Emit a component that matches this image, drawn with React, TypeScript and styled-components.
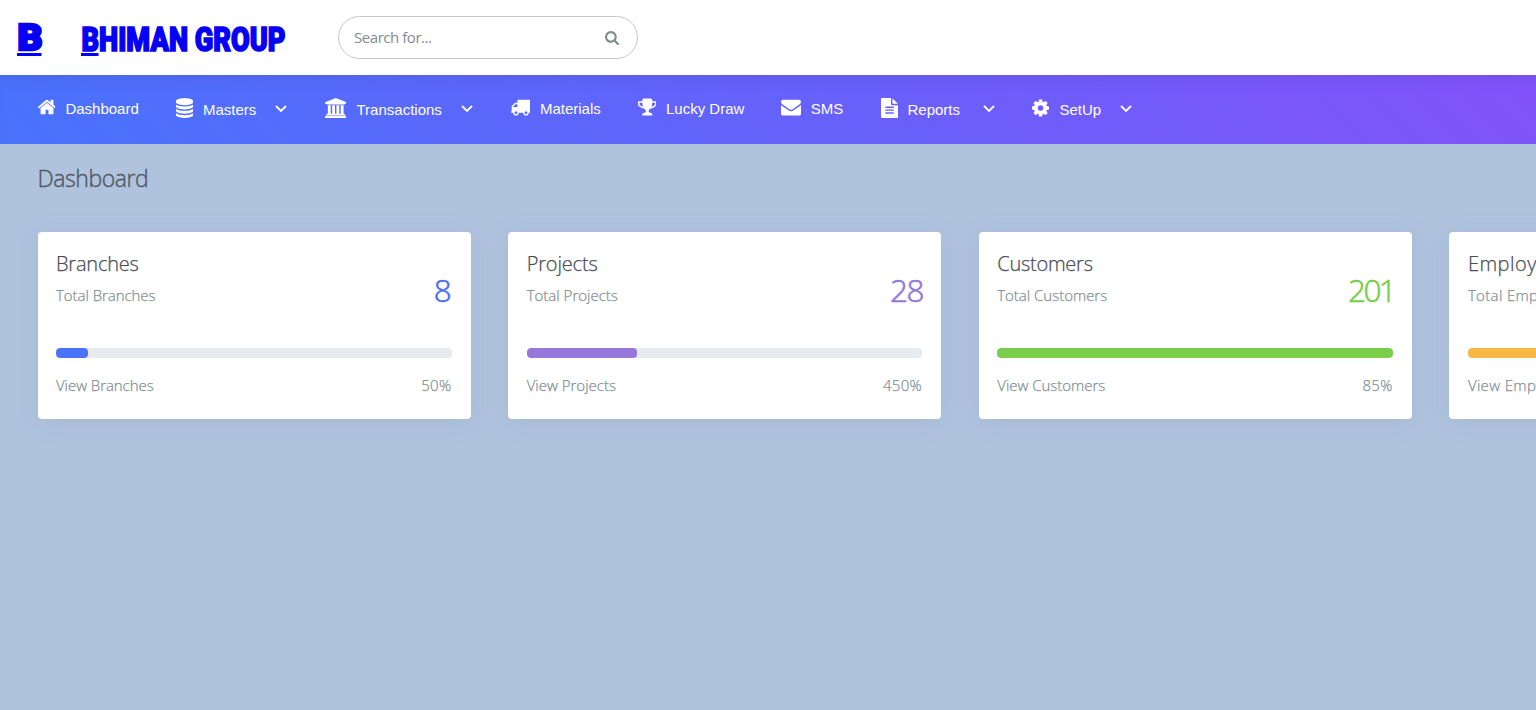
import React from "react";
import styled, { createGlobalStyle } from "styled-components";

const GlobalStyle = createGlobalStyle`
  * { box-sizing: border-box; }
  body {
    margin: 0;
    background: #b0c3dd;
    font-family: "Open Sans", "Noto Sans", sans-serif;
    font-weight: 300;
  }
`;

const Page = styled.div`
  width: 100%;
  min-height: 710px;
  overflow: hidden;
  background: #b0c3dd;
`;

const Header = styled.header`
  height: 75px;
  background: #fff;
  display: flex;
  align-items: flex-start;
`;

const Logo = styled.svg`
  width: 300px;
  height: 75px;
  display: block;
  flex: none;
`;

const SearchBox = styled.label`
  width: 300px;
  height: 43px;
  margin: 16px 0 0 38px;
  padding: 0 18px 2px 15px;
  border: 1px solid #c3c6ca;
  border-radius: 22px;
  display: flex;
  align-items: center;
  justify-content: space-between;
  color: #7f8d91;
  font-size: 15px;
  font-weight: 400;
  letter-spacing: -0.45px;

  svg {
    margin-top: 2px;
  }
`;

const Nav = styled.nav`
  width: 1920px;
  height: 69px;
  padding-left: 37.5px;
  display: flex;
  gap: 37.5px;
  background: linear-gradient(45deg, #4872fd 0%, #904afa 100%);
  box-shadow: inset 0 12px 16px -10px rgba(60, 70, 140, 0.22);
`;

const NavItem = styled.a<{ $width: number; $drop: number }>`
  width: ${(p) => p.$width}px;
  height: 22px;
  margin-top: ${(p) => 22 + p.$drop}px;
  flex: none;
  display: flex;
  align-items: flex-start;
  color: #fff;
  font: 400 15px/24px "Liberation Sans", Arial, sans-serif;
  white-space: nowrap;
`;

const IconSlot = styled.span<{ $width: number }>`
  width: ${(p) => p.$width}px;
  flex: none;
  display: flex;
`;

const Chevron = styled.svg`
  width: 12px;
  height: 8px;
  margin: 7px 0 0 auto;
  flex: none;
`;

const Title = styled.h1`
  margin: 0;
  padding: 18px 0 0 37.5px;
  height: 88px;
  font-size: 23px;
  line-height: 33px;
  font-weight: 300;
  -webkit-text-stroke: 0.35px;
  letter-spacing: -0.43px;
  color: #4e5763;
`;

const Cards = styled.main`
  width: 1920px;
  display: grid;
  grid-template-columns: repeat(4, 1fr);
  gap: 37.5px;
  padding: 0 37.5px;
`;

const Card = styled.section`
  height: 187px;
  padding: 17px 19px 0 18.5px;
  background: #fff;
  border-radius: 4px;
  box-shadow: 0 3px 20px rgba(130, 152, 190, 0.25);
`;

const Summary = styled.div`
  height: 99px;
  display: flex;
  justify-content: space-between;
`;

const CardTitle = styled.h2<{ $spacing: number }>`
  margin: 0;
  font-size: 20px;
  line-height: 30px;
  font-weight: 300;
  -webkit-text-stroke: 0.25px;
  letter-spacing: ${(p) => p.$spacing}px;
  color: #484d55;
`;

const Muted = styled.p<{ $spacing?: number }>`
  margin: 0;
  font-size: 15px;
  line-height: 22px;
  -webkit-text-stroke: 0.25px;
  letter-spacing: ${(p) => p.$spacing ?? 0.3}px;
  color: #819094;
`;

const Subtitle = styled(Muted)`
  margin-top: 5px;
`;

const Percent = styled(Muted)`
  margin-right: 0.3px;
`;

const Total = styled.strong<{ $color: string; $spacing: number }>`
  margin-top: 20px;
  margin-right: ${(p) => p.$spacing * 0.5}px;
  font-size: 31.5px;
  line-height: 42px;
  font-weight: 300;
  -webkit-text-stroke: 0.6px;
  letter-spacing: ${(p) => p.$spacing}px;
  color: ${(p) => p.$color};
`;

const Track = styled.div`
  height: 10px;
  border-radius: 4px;
  background: #e8ebed;
  overflow: hidden;
`;

const Fill = styled.div<{ $color: string }>`
  height: 100%;
  border-radius: 4px;
  background: ${(p) => p.$color};
`;

const Footer = styled.div`
  margin-top: 16px;
  display: flex;
  justify-content: space-between;
`;

type Glyph = { x: number; w: number; d: string };

const glyphs: Record<string, Glyph> = {
  home: { x: 90, w: 1612, d: "M1472 992v480q0 26-19 45t-45 19h-384v-384h-256v384h-384q-26 0-45-19t-19-45v-480q0-1 .5-3t.5-3l575-474 575 474q1 2 1 6zm223-69l-62 74q-8 9-21 11h-3q-13 0-21-7l-692-577-692 577q-12 8-24 7-13-2-21-11l-62-74q-8-10-7-23.5t11-21.5l719-599q32-26 76-26t76 26l244 204v-195q0-14 9-23t23-9h192q14 0 23 9t9 23v408l219 182q10 8 11 21.5t-7 23.5z" },
  database: { x: 128, w: 1536, d: "M896 768q237 0 443-43t325-127v170q0 69-103 128t-280 93.5-385 34.5-385-34.5-280-93.5-103-128v-170q119 84 325 127t443 43zm0 768q237 0 443-43t325-127v170q0 69-103 128t-280 93.5-385 34.5-385-34.5-280-93.5-103-128v-170q119 84 325 127t443 43zm0-384q237 0 443-43t325-127v170q0 69-103 128t-280 93.5-385 34.5-385-34.5-280-93.5-103-128v-170q119 84 325 127t443 43zm0-1152q208 0 385 34.5t280 93.5 103 128v128q0 69-103 128t-280 93.5-385 34.5-385-34.5-280-93.5-103-128v-128q0-69 103-128t280-93.5 385-34.5z" },
  university: { x: 0, w: 1920, d: "M960 0l960 384v128h-128q0 26-20.5 45t-48.5 19h-1526q-28 0-48.5-19t-20.5-45h-128v-128zm-704 640h256v768h128v-768h256v768h128v-768h256v768h128v-768h256v768h59q28 0 48.5 19t20.5 45v64h-1664v-64q0-26 20.5-45t48.5-19h59v-768zm1595 960q28 0 48.5 19t20.5 45v128h-1920v-128q0-26 20.5-45t48.5-19h1782z" },
  truck: { x: 64, w: 1728, d: "M640 1408q0-52-38-90t-90-38-90 38-38 90 38 90 90 38 90-38 38-90zm-384-512h384v-256h-158q-13 0-22 9l-195 195q-9 9-9 22v30zm1280 512q0-52-38-90t-90-38-90 38-38 90 38 90 90 38 90-38 38-90zm256-1088v1024q0 15-4 26.5t-13.5 18.5-16.5 11.5-23.5 6-22.5 2-25.5 0-22.5-.5q0 106-75 181t-181 75-181-75-75-181h-384q0 106-75 181t-181 75-181-75-75-181h-64q-3 0-22.5.5t-25.5 0-22.5-2-23.5-6-16.5-11.5-13.5-18.5-4-26.5q0-26 19-45t45-19v-320q0-8-.5-35t0-38 2.5-34.5 6.5-37 14-30.5 22.5-30l198-198q19-19 50.5-32t58.5-13h160v-192q0-26 19-45t45-19h1024q26 0 45 19t19 45z" },
  trophy: { x: 64, w: 1664, d: "M522 883q-74-162-74-371h-256v96q0 78 94.5 162t235.5 113zm1078-275v-96h-256q0 209-74 371 141-29 235.5-113t94.5-162zm128-128v128q0 71-41.5 143t-112 130-173 97.5-215.5 44.5q-42 54-95 95-38 34-52.5 72.5t-14.5 89.5q0 54 30.5 91t97.5 37q75 0 133.5 45.5t58.5 114.5v64q0 14-9 23t-23 9h-832q-14 0-23-9t-9-23v-64q0-69 58.5-114.5t133.5-45.5q67 0 97.5-37t30.5-91q0-51-14.5-89.5t-52.5-72.5q-53-41-95-95-113-5-215.5-44.5t-173-97.5-112-130-41.5-143v-128q0-40 28-68t68-28h288v-96q0-66 47-113t113-47h576q66 0 113 47t47 113v96h288q40 0 68 28t28 68z" },
  envelope: { x: 0, w: 1792, d: "M1792 710v794q0 66-47 113t-113 47h-1472q-66 0-113-47t-47-113v-794q44 49 101 87 362 246 497 345 57 42 92.5 65.5t94.5 48 110 24.5h2q51 0 110-24.5t94.5-48 92.5-65.5q170-123 498-345 57-39 100-87zm0-294q0 79-49 151t-122 123q-376 261-468 325-10 7-42.5 31t-54 38.5-52 32.5-57.5 27-50 9h-2q-23 0-50-9t-57.5-27-52-32.5-54-38.5-42.5-31q-91-64-262-182.5t-205-142.5q-62-42-117-115.5t-55-136.5q0-78 41.5-130t118.5-52h1472q65 0 112.5 47t47.5 113z" },
  file: { x: 128, w: 1536, d: "M1596 476q14 14 28 36h-472v-472q22 14 36 28zm-476 164h544v1056q0 40-28 68t-68 28h-1344q-40 0-68-28t-28-68v-1600q0-40 28-68t68-28h800v544q0 40 28 68t68 28zm160 736v-64q0-14-9-23t-23-9h-704q-14 0-23 9t-9 23v64q0 14 9 23t23 9h704q14 0 23-9t9-23zm0-256v-64q0-14-9-23t-23-9h-704q-14 0-23 9t-9 23v64q0 14 9 23t23 9h704q14 0 23-9t9-23zm0-256v-64q0-14-9-23t-23-9h-704q-14 0-23 9t-9 23v64q0 14 9 23t23 9h704q14 0 23-9t9-23z" },
  cog: { x: 128, w: 1536, d: "M1152 896q0-106-75-181t-181-75-181 75-75 181 75 181 181 75 181-75 75-181zm512-109v222q0 12-8 23t-20 13l-185 28q-19 54-39 91 35 50 107 138 10 12 10 25t-9 23q-27 37-99 108t-94 71q-12 0-26-9l-138-108q-44 23-91 38-16 136-29 186-7 28-36 28h-222q-14 0-24.5-8.5t-11.5-21.5l-28-184q-49-16-90-37l-141 107q-10 9-25 9-14 0-25-11-126-114-165-168-7-10-7-23 0-12 8-23 15-21 51-66.5t54-70.5q-27-50-41-99l-183-27q-13-2-21-12.5t-8-23.5v-222q0-12 8-23t19-13l186-28q14-46 39-92-40-57-107-138-10-12-10-24 0-10 9-23 26-36 98.5-107.5t94.5-71.5q13 0 26 10l138 107q44-23 91-38 16-136 29-186 7-28 36-28h222q14 0 24.5 8.5t11.5 21.5l28 184q49 16 90 37l142-107q9-9 24-9 13 0 25 10 129 119 165 170 7 8 7 22 0 12-8 23-15 21-51 66.5t-54 70.5q26 50 41 98l183 28q13 2 21 12.5t8 23.5z" },
  search: { x: 64, w: 1664, d: "M1216 832q0-185-131.5-316.5t-316.5-131.5-316.5 131.5-131.5 316.5 131.5 316.5 316.5 131.5 316.5-131.5 131.5-316.5zm512 832q0 52-38 90t-90 38q-54 0-90-38l-343-342q-179 124-399 124-143 0-273.5-55.5t-225-150-150-225-55.5-273.5 55.5-273.5 150-225 225-150 273.5-55.5 273.5 55.5 225 150 150 225 55.5 273.5q0 220-124 399l343 343q37 37 37 90z" },
};

function Icon({ name, size }: { name: string; size: number }) {
  const g = glyphs[name];
  return (
    <svg width={(g.w / 1792) * size} height={size} viewBox={`${g.x} 0 ${g.w} 1792`} fill="currentColor" aria-hidden>
      <path d={g.d} />
    </svg>
  );
}

const menu = [
  { label: "Dashboard", icon: "home", slot: 27.9, width: 101, drop: 0 },
  { label: "Masters", icon: "database", slot: 27, width: 111, drop: 1, sub: true },
  { label: "Transactions", icon: "university", slot: 32, width: 148.5, drop: 1, sub: true },
  { label: "Materials", icon: "truck", slot: 29.4, width: 89.5, drop: 0 },
  { label: "Lucky Draw", icon: "trophy", slot: 28.5, width: 106, drop: 0 },
  { label: "SMS", icon: "envelope", slot: 29.7, width: 62, drop: 0 },
  { label: "Reports", icon: "file", slot: 27, width: 114, drop: 1, sub: true },
  { label: "SetUp", icon: "cog", slot: 27.5, width: 100, drop: 1, sub: true },
];

const cards = [
  { name: "Branches", total: "8", color: "#4a6ef5", bar: "#4b72fb", fill: 8, percent: "50%", head: -0.2, text: -0.05, figure: 0 },
  { name: "Projects", total: "28", color: "#9277db", bar: "#9678db", fill: 28, percent: "450%", head: -0.15, text: 0.01, figure: -1.5 },
  { name: "Customers", total: "201", color: "#7acd49", bar: "#7bce4c", fill: 100, percent: "85%", head: -0.25, text: -0.02, figure: -2.6 },
  { name: "Employees", total: "35", color: "#f7b844", bar: "#f7b844", fill: 35, percent: "35%", head: 0.5, text: 0.35, figure: -1.5 },
];

export default function App() {
  return (
    <Page>
      <GlobalStyle />
      <Header>
        <Logo viewBox="0 0 300 75" fill="#0500f5" stroke="#0500f5" fontFamily="Roboto, sans-serif" fontWeight={900}>
          <text x="17.5" y="49.5" fontSize="36" strokeWidth="2.6" textLength="25" lengthAdjust="spacingAndGlyphs">B</text>
          <rect x="17" y="53" width="24.5" height="3" stroke="none" />
          <text x="81.5" y="50.5" fontSize="33" strokeWidth="1.6" textLength="204" lengthAdjust="spacingAndGlyphs">BHIMAN GROUP</text>
          <rect x="81" y="53" width="17.5" height="3" stroke="none" />
        </Logo>
        <SearchBox>
          <span>Search for...</span>
          <Icon name="search" size={15} />
        </SearchBox>
      </Header>
      <Nav>
        {menu.map((m) => (
          <NavItem key={m.label} $width={m.width} $drop={m.drop}>
            <IconSlot $width={m.slot}>
              <Icon name={m.icon} size={20} />
            </IconSlot>
            {m.label}
            {m.sub && (
              <Chevron viewBox="0 0 12 8" fill="none" stroke="#fff" strokeWidth="1.8">
                <path d="M1 1l5 5 5-5" />
              </Chevron>
            )}
          </NavItem>
        ))}
      </Nav>
      <Title>Dashboard</Title>
      <Cards>
        {cards.map((c) => (
          <Card key={c.name}>
            <Summary>
              <div>
                <CardTitle $spacing={c.head}>{c.name}</CardTitle>
                <Subtitle $spacing={c.text}>Total {c.name}</Subtitle>
              </div>
              <Total $color={c.color} $spacing={c.figure}>{c.total}</Total>
            </Summary>
            <Track>
              <Fill $color={c.bar} style={{ width: `${c.fill}%` }} />
            </Track>
            <Footer>
              <Muted $spacing={c.text}>View {c.name}</Muted>
              <Percent>{c.percent}</Percent>
            </Footer>
          </Card>
        ))}
      </Cards>
    </Page>
  );
}
